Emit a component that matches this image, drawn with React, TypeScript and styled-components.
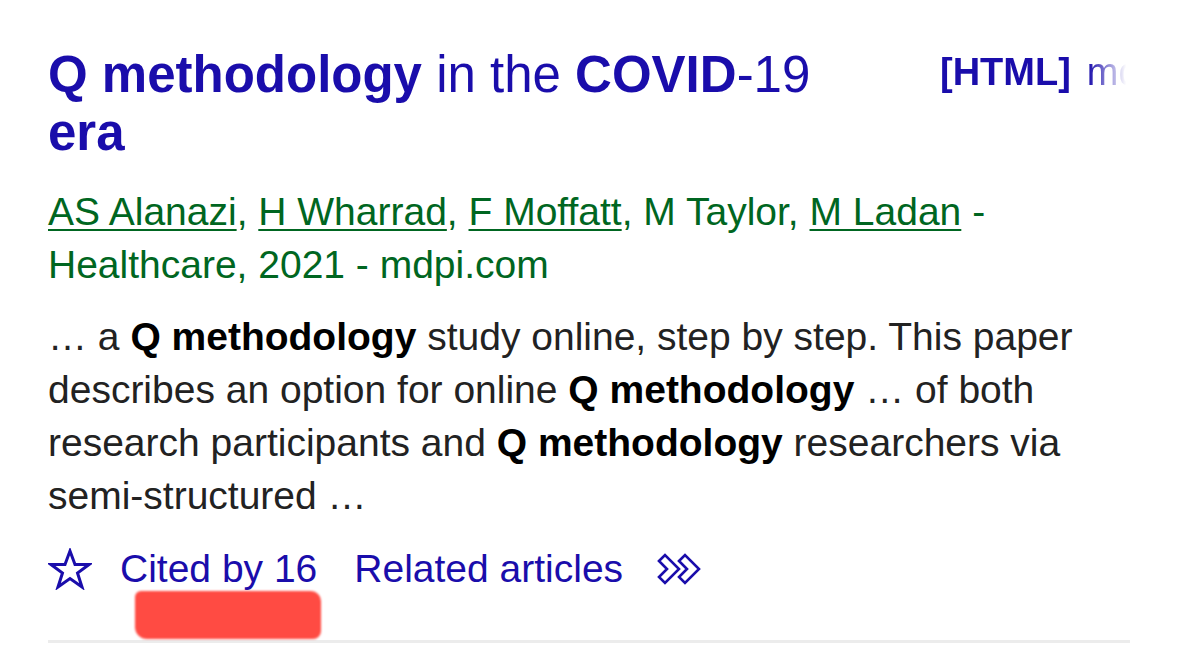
import { createGlobalStyle, styled } from 'styled-components';

const GlobalStyle = createGlobalStyle`
  html, body {
    margin: 0;
    padding: 0;
    background: #fff;
  }
  body {
    font-family: "Liberation Sans", Arial, sans-serif;
  }
`;

const Page = styled.div`
  width: 1082px;
  padding: 46px 0 0 48px;
`;

const Head = styled.div`
  display: flex;
  align-items: flex-start;
  gap: 32px;
`;

const Title = styled.h3`
  flex: 0 0 860px;
  margin: 0;
  padding-right: 40px;
  box-sizing: border-box;
  font-size: 51px;
  line-height: 58px;
  font-weight: 400;
  color: #1a0dab;
  b {
    font-weight: 700;
  }
`;

const Source = styled.div`
  flex: 1;
  min-width: 0;
  overflow: hidden;
  white-space: nowrap;
  margin-top: -3px;
  font-size: 38px;
  line-height: 58px;
  color: #1a0dab;
  mask-image: linear-gradient(to right, #000 78%, transparent 98%);
  -webkit-mask-image: linear-gradient(to right, #000 78%, transparent 98%);
  b {
    font-weight: 700;
    margin-right: 16px;
  }
`;

const Authors = styled.div`
  margin-top: 23px;
  font-size: 39px;
  line-height: 53.3px;
  color: #006621;
  a {
    color: #006621;
    text-decoration: underline;
    text-underline-offset: 4px;
    text-decoration-thickness: 2px;
  }
`;

const Snippet = styled.div`
  margin-top: 18px;
  font-size: 39px;
  line-height: 53.3px;
  color: #222;
  b {
    color: #000;
  }
`;

const Footer = styled.div`
  margin-top: 20px;
  display: flex;
  align-items: center;
  height: 53px;
  font-size: 39px;
  color: #1a0dab;
`;

const IconBox = styled.span<{ $w: number; $mr: number }>`
  display: flex;
  width: ${(p) => p.$w}px;
  margin-right: ${(p) => p.$mr}px;
`;

const Link = styled.a<{ $mr?: number }>`
  position: relative;
  color: #1a0dab;
  text-decoration: none;
  margin-right: ${(p) => p.$mr ?? 0}px;
`;

// red marker stroke someone drew over the citation count
const Scribble = styled.span`
  position: absolute;
  left: 15px;
  top: 44px;
  width: 186px;
  height: 48px;
  background: #ff4b43;
  border-radius: 6px 10px 8px 12px;
  filter: blur(1.2px);
`;

const Divider = styled.div`
  margin-top: 44px;
  height: 3px;
  background: #ececec;
`;

function StarIcon() {
  return (
    <svg width="44" height="42" viewBox="0 0 44 42">
      <polygon
        points="22,3 27,16.5 41,16.5 29.5,25 34,39 22,30.5 10,39 14.5,25 3,16.5 17,16.5"
        fill="none"
        stroke="#1a0dab"
        strokeWidth="3"
        strokeLinejoin="miter"
      />
    </svg>
  );
}

const chevron = '0,6 6,0 20,14 6,28 0,22 8,14';

function MoreIcon() {
  return (
    <svg width="46" height="32" viewBox="0 0 46 32">
      <g fill="none" stroke="#1a0dab" strokeWidth="2.6" strokeLinejoin="miter" transform="translate(2,2)">
        <polygon points={chevron} />
        <polygon points={chevron} transform="translate(20,0)" />
      </g>
    </svg>
  );
}

export default function App() {
  return (
    <>
      <GlobalStyle />
      <Page>
        <Head>
          <Title>
            <b>Q methodology</b> in the <b>COVID</b>-19 <b>era</b>
          </Title>
          <Source>
            <b>[HTML]</b>mdpi.com
          </Source>
        </Head>
        <Authors>
          <a>AS Alanazi</a>, <a>H Wharrad</a>, <a>F Moffatt</a>, M Taylor, <a>M Ladan</a> -
          Healthcare, 2021 - mdpi.com
        </Authors>
        <Snippet>
          … a <b>Q methodology</b> study online, step by step. This paper describes an option for
          online <b>Q methodology</b> … of both research participants and <b>Q methodology</b>{' '}
          researchers via semi-structured …
        </Snippet>
        <Footer>
          <IconBox $w={44} $mr={28}>
            <StarIcon />
          </IconBox>
          <Link $mr={37}>
            Cited by 16
            <Scribble />
          </Link>
          <Link $mr={34}>Related articles</Link>
          <IconBox $w={46} $mr={0}>
            <MoreIcon />
          </IconBox>
        </Footer>
        <Divider />
      </Page>
    </>
  );
}
